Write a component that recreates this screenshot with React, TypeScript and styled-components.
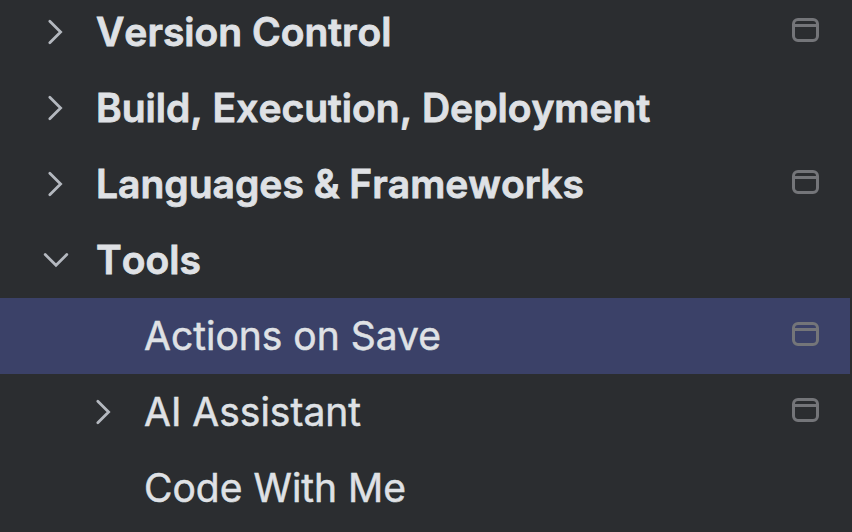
import React from "react";
import styled, { createGlobalStyle } from "styled-components";

const Global = createGlobalStyle`
  body { margin: 0; background: #2b2d30; overflow: hidden; }
`;

const Tree = styled.div`
  display: flex;
  flex-direction: column;
  height: 532px;
  overflow: hidden;
  background: #2b2d30;
  font-family: Inter, sans-serif;
`;

const Row = styled.div<{ $first?: boolean; $selected?: boolean; $nested?: boolean }>`
  display: flex;
  align-items: center;
  flex: none;
  box-sizing: border-box;
  height: 76px;
  margin-top: ${(p) => (p.$first ? "-6px" : "0")};
  margin-right: 2px;
  padding: 0 30px 0 ${(p) => (p.$nested ? "88px" : "40px")};
  background: ${(p) => (p.$selected ? "#3b4168" : "transparent")};
`;

const ArrowSlot = styled.div`
  flex: none;
  width: 56px;
  height: 32px;
  svg { display: block; }
`;

const Label = styled.span<{ $bold?: boolean }>`
  flex: 1;
  color: #dfe1e5;
  font-size: 39px;
  line-height: 48px;
  font-weight: ${(p) => (p.$bold ? 600 : 400)};
  font-kerning: ${(p) => (p.$bold ? "none" : "normal")};
  -webkit-text-stroke: ${(p) => (p.$bold ? "0.8px" : "0.5px")} #dfe1e5;
  white-space: nowrap;
`;

const ProjectIcon = () => (
  <svg width="30" height="30" viewBox="0 0 30 30" fill="none" stroke="#747579" strokeWidth="3">
    <rect x="3.5" y="2.5" width="24" height="21" rx="4.5" />
    <path d="M3.5 8.5H27.5" />
  </svg>
);

const Arrow = ({ open }: { open?: boolean }) => (
  <svg width="32" height="32" viewBox="0 0 32 32" fill="none" stroke="#b4b8bf" strokeWidth="2.8" strokeLinecap="round">
    <path d={open ? "M5.2 10.6L16 21.2L26.8 10.6" : "M9.8 5.2L20.6 16L9.8 26.8"} />
  </svg>
);

type Item = { label: string; arrow?: "open" | "closed"; bold?: boolean; nested?: boolean; selected?: boolean; project?: boolean };

const items: Item[] = [
  { label: "Version Control", arrow: "closed", bold: true, project: true },
  { label: "Build, Execution, Deployment", arrow: "closed", bold: true },
  { label: "Languages & Frameworks", arrow: "closed", bold: true, project: true },
  { label: "Tools", arrow: "open", bold: true },
  { label: "Actions on Save", nested: true, selected: true, project: true },
  { label: "AI Assistant", arrow: "closed", nested: true, project: true },
  { label: "Code With Me", nested: true },
];

export default function App() {
  return (
    <>
      <Global />
      <Tree>
        {items.map((it, i) => (
          <Row key={it.label} $first={i === 0} $selected={it.selected} $nested={it.nested}>
            <ArrowSlot>{it.arrow && <Arrow open={it.arrow === "open"} />}</ArrowSlot>
            <Label $bold={it.bold}>{it.label}</Label>
            {it.project && <ProjectIcon />}
          </Row>
        ))}
      </Tree>
    </>
  );
}
